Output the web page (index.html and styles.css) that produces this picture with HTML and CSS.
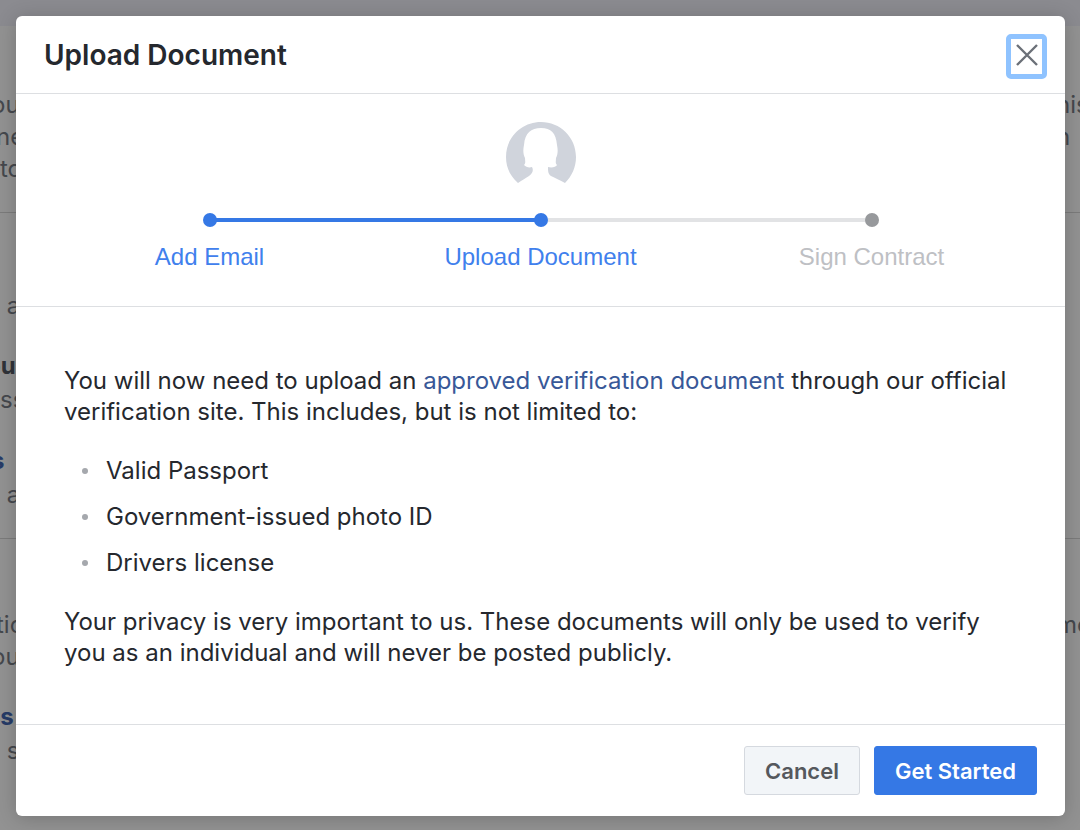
FILE: index.html
```html
<!DOCTYPE html>
<html lang="en">
<head>
<meta charset="utf-8">
<meta name="viewport" content="width=device-width, initial-scale=1">
<title>Upload Document</title>
<link rel="stylesheet" href="styles.css">
</head>
<body>
<div class="page" aria-hidden="true">
  <div class="topbar"></div>
  <div class="section intro">
    <div class="line"><span class="shift-m">ou</span><span>his</span></div>
    <div class="line"><span class="shift-s">ne</span><span>n</span></div>
    <div class="line"><span>to</span></div>
  </div>
  <div class="section middle">
    <div class="line"><span> a</span></div>
    <div class="group">
      <div class="line strong"><span class="shift-l">ou</span></div>
      <div class="line"><span class="shift-l">ess</span></div>
    </div>
    <div class="group">
      <div class="line strong blue"><span class="shift-m">s</span></div>
      <div class="line"><span> a</span></div>
    </div>
  </div>
  <div class="section last">
    <div class="line"><span class="shift-s">tio</span><span>me</span></div>
    <div class="line"><span class="shift-m">ou</span></div>
    <div class="group">
      <div class="line strong blue"><span class="shift-l">es</span></div>
      <div class="line"><span> s</span></div>
    </div>
  </div>
</div>

<div class="overlay">
  <section class="dialog" role="dialog" aria-modal="true" aria-labelledby="dialog-title">
    <header class="dialog-header">
      <h1 class="dialog-title" id="dialog-title">Upload Document</h1>
      <button class="close" type="button" aria-label="Close">
        <svg width="24" height="24" viewBox="0 0 24 24"><path d="M2 2L22 22M22 2L2 22" fill="none" stroke="#6b7078" stroke-width="2.4"/></svg>
      </button>
    </header>

    <div class="progress">
      <svg class="avatar" width="70" height="63" viewBox="0 0 70 63">
        <path fill="#d0d4dc" d="M12 61C4 54 0 45 0 35C0 15 16 0 35 0S70 15 70 35C70 45 66 54 59 61C54 58 49 56 45 54C42 52 42 49 42 45C46 46 50 45 51 43C49 41 50 39 50 36C52 32 52 28 51 23C50 11 45 6 35 6S19 11 18 23C17 28 17 32 19 36C19 39 20 41 18 43C20 45 23 46 26 45C28 49 26 52 23 54C20 56 16 58 12 61Z"/>
      </svg>
      <ol class="steps">
        <li class="step done"><span class="dot"></span><span>Add Email</span></li>
        <li class="step current"><span class="dot"></span><span>Upload Document</span></li>
        <li class="step"><span class="dot"></span><span>Sign Contract</span></li>
      </ol>
    </div>

    <div class="dialog-body">
      <p>You will now need to upload an <a href="#">approved verification document</a> through our official verification site. This includes, but is not limited to:</p>
      <ul class="documents">
        <li>Valid Passport</li>
        <li>Government-issued photo ID</li>
        <li>Drivers license</li>
      </ul>
      <p>Your privacy is very important to us. These documents will only be used to verify you as an individual and will never be posted publicly.</p>
    </div>

    <footer class="dialog-footer">
      <button class="button" type="button">Cancel</button>
      <button class="button primary" type="button">Get Started</button>
    </footer>
  </section>
</div>
</body>
</html>
```

FILE: styles.css
```css
* {
  box-sizing: border-box;
}

body {
  margin: 0;
  background: #929292;
  color: #25282e;
  font-family: Inter, "Liberation Sans", sans-serif;
  font-size: 24px;
}

p, ul, ol, h1 {
  margin: 0;
  padding: 0;
}

/* Dimmed page behind the dialog */
.page {
  min-height: 100vh;
  overflow: hidden;
  color: #45484d;
  line-height: 32px;
}

.topbar {
  height: 26px;
  background: #8b8b90;
}

.section {
  border-bottom: 1px solid #7b7b7b;
}

.intro {
  padding: 63px 0 27px;
}

.middle {
  padding: 77px 0 26px;
}

.last {
  padding-top: 70px;
  border-bottom: 0;
}

.line {
  display: grid;
  grid-template-columns: 1fr 24px;
  white-space: pre;
}

.group {
  margin-top: 27px;
  line-height: 34px;
}

.strong {
  font-weight: 700;
  color: #303339;
}

.blue {
  color: #263b67;
}

.shift-s {
  margin-left: -4px;
}

.shift-m {
  margin-left: -9px;
}

.shift-l {
  margin-left: -14px;
}

/* Dialog */
.overlay {
  position: absolute;
  inset: 0;
  padding: 16px 15px 14px 16px;
}

.dialog {
  background: #fff;
  border-radius: 6px;
  box-shadow: 0 2px 20px rgba(0, 0, 0, 0.2);
}

.dialog-header {
  display: flex;
  align-items: center;
  justify-content: space-between;
  padding: 18px 18px 14px 28px;
  border-bottom: 1px solid #dddfe2;
}

.dialog-title {
  font-size: 28px;
  line-height: 32px;
  font-weight: 600;
  padding-bottom: 4px;
}

.close {
  display: flex;
  justify-content: center;
  align-items: flex-start;
  width: 41px;
  height: 45px;
  padding: 4px 0 0;
  border: 5px solid #8fc3ff;
  border-radius: 5px;
  background: #fff;
}

.close svg {
  flex: none;
}

.progress {
  padding: 28px 28px 34px;
  border-bottom: 1px solid #dddfe2;
}

.avatar {
  display: block;
  margin: 0 auto;
}

.steps {
  display: grid;
  grid-template-columns: repeat(3, 1fr);
  padding-top: 28px;
  list-style: none;
  font-family: "Liberation Sans", Arial, sans-serif;
  line-height: 30px;
  text-align: center;
  color: #bec0c4;
}

.step {
  position: relative;
  display: flex;
  flex-direction: column;
  align-items: center;
  gap: 15px;
}

.step:not(:last-child)::after {
  content: "";
  position: absolute;
  top: 5px;
  left: 50%;
  width: 100%;
  height: 4px;
  background: #e2e3e5;
}

.step.done::after {
  background: #3578e5;
}

.dot {
  position: relative;
  z-index: 1;
  width: 14px;
  height: 14px;
  border-radius: 50%;
  background: #97999c;
}

.done, .current {
  color: #4080ed;
}

.done .dot, .current .dot {
  background: #3578e5;
}

.dialog-body {
  padding: 58px 48px 56px;
  line-height: 31px;
}

a {
  color: #385898;
  text-decoration: none;
}

.documents {
  display: grid;
  gap: 15px;
  padding: 28px 0;
  list-style: none;
}

.documents li {
  display: flex;
  align-items: center;
  gap: 18px;
  padding-left: 18px;
}

.documents li::before {
  content: "";
  width: 6px;
  height: 6px;
  border-radius: 50%;
  background: #a5a8ad;
}

.dialog-footer {
  display: flex;
  justify-content: flex-end;
  gap: 14px;
  padding: 21px 28px;
  border-top: 1px solid #dddfe2;
}

.button {
  height: 49px;
  padding: 0 20px;
  border: 1px solid #d5d9df;
  border-radius: 3px;
  background: #f2f5f8;
  color: #55585d;
  font-family: inherit;
  font-size: 22px;
  font-weight: 600;
}

.button.primary {
  border-color: #3578e5;
  background: #3578e5;
  color: #fff;
}
```
